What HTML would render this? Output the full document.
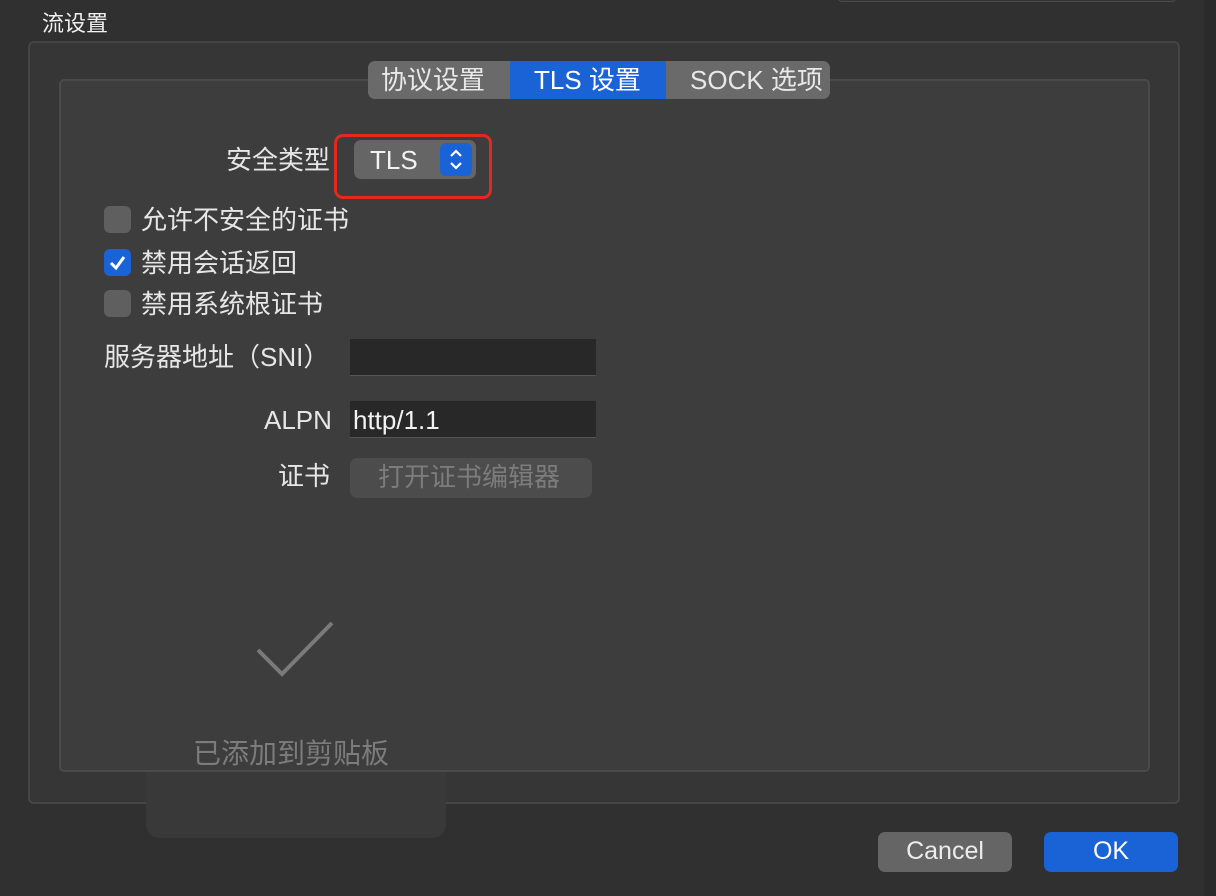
<!DOCTYPE html>
<html><head><meta charset="utf-8"><style>
*{margin:0;padding:0;box-sizing:border-box}
body{width:1216px;height:896px;background:#303030;position:relative;overflow:hidden;font-family:"Liberation Sans","Noto Sans CJK SC",sans-serif;color:#e6e6e6}
.a{position:absolute}
.t{font-size:25px;line-height:1;white-space:nowrap}
.cb{width:27px;height:27px;border-radius:6px;background:#5f5f5f;left:104px}
</style></head><body>
<div class="a" style="left:838px;top:-10px;width:338px;height:12px;border:1px solid #4a4a4a;border-radius:4px;background:#353535"></div>
<div class="a" style="left:1204px;top:0;width:12px;height:896px;background:#2a2a2a"></div>
<div class="a" style="left:42px;top:13px;font-size:22px;line-height:1;color:#f0f0f0">流设置</div>
<div class="a" style="left:28px;top:41px;width:1152px;height:763px;background:#363636;border:2px solid #454545;border-radius:6px"></div>
<div class="a" style="left:146px;top:700px;width:300px;height:138px;background:#393939;border-radius:14px"></div>
<div class="a" style="left:59px;top:79px;width:1091px;height:693px;background:#3d3d3d;border:2px solid #4a4a4a;border-radius:5px"></div>
<div class="a" style="left:368px;top:61px;width:462px;height:38px;border-radius:7px;background:#6a6a6a;overflow:hidden">
 <div class="a t" style="left:13px;top:6px;font-size:26px;color:#e8e8e8">协议设置</div>
 <div class="a" style="left:142px;top:0;width:156px;height:38px;background:#1a63d6"></div>
 <div class="a t" style="left:166px;top:6px;font-size:26px;color:#fff">TLS 设置</div>
 <div class="a t" style="left:322px;top:6px;font-size:26px;color:#e8e8e8">SOCK 选项</div>
</div>
<div class="a t" style="left:226px;top:147px;font-size:26px">安全类型</div>
<div class="a" style="left:334px;top:134px;width:158px;height:65px;border:3px solid #e3281e;border-radius:9px"></div>
<div class="a" style="left:354px;top:140px;width:122px;height:39px;background:#656565;border-radius:7px"></div>
<div class="a t" style="left:370px;top:147px;font-size:26px;color:#f2f2f2">TLS</div>
<div class="a" style="left:440px;top:143px;width:32px;height:33px;background:#1a63d6;border-radius:6px"></div>
<svg class="a" style="left:440px;top:143px" width="32" height="33"><path d="M11 13l5-5 5 5M11 20l5 5 5-5" stroke="#fff" stroke-width="2.2" fill="none"/></svg>
<div class="a cb" style="top:206px"></div>
<div class="a t" style="left:141px;top:207px;font-size:26px">允许不安全的证书</div>
<div class="a cb" style="top:249px;background:#1a63d6"></div>
<svg class="a" style="left:104px;top:249px" width="27" height="27"><path d="M7 14l5 5 8-11" stroke="#fff" stroke-width="3" fill="none"/></svg>
<div class="a t" style="left:141px;top:250px;font-size:26px">禁用会话返回</div>
<div class="a cb" style="top:290px"></div>
<div class="a t" style="left:141px;top:291px;font-size:26px">禁用系统根证书</div>
<div class="a t" style="left:104px;top:344px;font-size:26px">服务器地址（SNI）</div>
<div class="a" style="left:350px;top:339px;width:246px;height:37px;background:#282828;border-bottom:1px solid #555"></div>
<div class="a t" style="left:264px;top:407px;font-size:26px">ALPN</div>
<div class="a" style="left:350px;top:401px;width:246px;height:37px;background:#282828;border-bottom:1px solid #555"></div>
<div class="a t" style="left:353px;top:407px;font-size:26px;color:#f2f2f2">http/1.1</div>
<div class="a t" style="left:278px;top:463px;font-size:26px">证书</div>
<div class="a" style="left:350px;top:458px;width:242px;height:40px;background:#4c4c4c;border-radius:7px"></div>
<div class="a t" style="left:378px;top:464px;font-size:26px;color:#7c7c7c">打开证书编辑器</div>
<svg class="a" style="left:250px;top:615px" width="90" height="70"><path d="M8 35l24 24 50-51" stroke="#7a7a7a" stroke-width="4" fill="none"/></svg>
<div class="a" style="left:193px;top:740px;font-size:28px;line-height:1;color:#7c7c7c">已添加到剪贴板</div>
<div class="a" style="left:878px;top:832px;width:134px;height:40px;background:#656565;border-radius:7px"></div>
<div class="a t" style="left:878px;top:839px;width:134px;text-align:center;color:#ececec">Cancel</div>
<div class="a" style="left:1044px;top:832px;width:134px;height:40px;background:#1a63d6;border-radius:7px"></div>
<div class="a t" style="left:1044px;top:839px;width:134px;text-align:center;color:#fff">OK</div>
</body></html>
